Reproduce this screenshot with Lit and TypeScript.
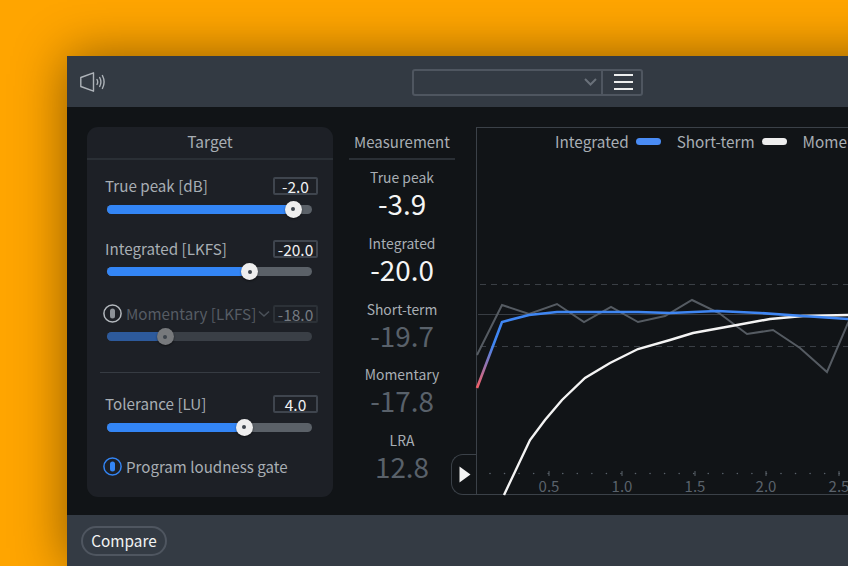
import { LitElement, html, css, svg } from "lit";
import { customElement, property } from "lit/decorators.js";

const FONT = css`"Noto Sans CJK SC", "Noto Sans", sans-serif`;

@customElement("toggle-dot")
class ToggleDot extends LitElement {
  static styles = css`
    :host {
      display: block;
      width: 19px;
      height: 19px;
      flex: none;
    }
    svg {
      display: block;
    }
  `;

  @property({ type: Boolean }) on = false;

  render() {
    const ring = this.on ? "#3385f5" : "#b4b9be";
    const pill = this.on ? "#3385f5" : "#8d9298";
    return html`<svg width="19" height="19" viewBox="0 0 19 19">
      <circle cx="9.5" cy="9.5" r="8.6" fill="none" stroke=${ring} stroke-width="1.5" />
      <rect x="7" y="4.5" width="5" height="10" rx="2.5" fill=${pill} />
    </svg>`;
  }
}

@customElement("level-slider")
class LevelSlider extends LitElement {
  static styles = css`
    :host {
      display: block;
      font-family: ${FONT};
    }
    .head {
      display: flex;
      align-items: center;
      height: 18px;
      margin-left: -2px;
    }
    .label {
      margin-top: -2px;
      font-size: 15.2px;
      line-height: 18px;
      color: #a8aeb4;
      white-space: nowrap;
    }
    .chev {
      margin-left: 2px;
    }
    .value {
      box-sizing: border-box;
      margin-left: auto;
      margin-right: -6px;
      width: 45px;
      height: 18px;
      border: 2px solid #3f454e;
      border-radius: 2px;
      font-size: 15.5px;
      line-height: 14px;
      text-align: center;
      color: #f0f1f2;
    }
    .track {
      position: relative;
      margin-top: 9.5px;
      height: 9px;
      border-radius: 5px;
      background: #5b6168;
    }
    .fill {
      height: 100%;
      border-radius: 5px;
      background: #3385f5;
    }
    .knob {
      position: absolute;
      top: -4px;
      width: 17px;
      height: 17px;
      margin-left: -8.5px;
      border-radius: 50%;
      background: #eeeeee;
      box-shadow: 0 1px 2px rgba(0, 0, 0, 0.5);
      display: flex;
      align-items: center;
      justify-content: center;
    }
    .knob i {
      width: 4px;
      height: 4px;
      border-radius: 50%;
      background: #3d444c;
    }
    .toggle {
      margin-left: -2px;
      margin-right: 4px;
    }
    :host([off]) .label {
      color: #565c64;
    }
    :host([off]) .value {
      border-color: #2c3137;
      color: #757b82;
    }
    :host([off]) .track {
      background: #3a3f46;
    }
    :host([off]) .fill {
      background: #2d5a9c;
    }
    :host([off]) .knob {
      background: #77797c;
    }
  `;

  @property() label = "";
  @property() value = "";
  @property({ type: Number }) pos = 0;
  @property({ type: Boolean, reflect: true }) off = false;

  render() {
    return html`
      <div class="head">
        ${this.off ? html`<toggle-dot class="toggle"></toggle-dot>` : ""}
        <span class="label">${this.label}</span>
        ${this.off
          ? html`<svg class="chev" width="12" height="8" viewBox="0 0 12 8">
              <path d="M1 1.5 L6 6 L11 1.5" fill="none" stroke="#4a5058" stroke-width="1.6" />
            </svg>`
          : ""}
        <span class="value">${this.value}</span>
      </div>
      <div class="track">
        <div class="fill" style="width:${this.pos}px"></div>
        <div class="knob" style="left:${this.pos}px"><i></i></div>
      </div>
    `;
  }
}

@customElement("app-root")
export class AppRoot extends LitElement {
  static styles = css`
    :host {
      display: block;
      width: 848px;
      height: 566px;
      overflow: hidden;
      background: #ffa500;
      font-family: ${FONT};
    }
    .window {
      width: 1000px;
      margin: 56px 0 0 67px;
      box-shadow: 0 0 50px rgba(0, 0, 0, 0.45);
    }
    .toolbar {
      display: flex;
      align-items: center;
      height: 51px;
      padding-left: 13px;
      background: #333a43;
    }
    .speaker {
      width: 26px;
      height: 20px;
      margin-right: 306px;
    }
    .dropdown {
      display: flex;
      box-sizing: border-box;
      width: 231px;
      height: 27px;
      margin-top: 1px;
      border: 2px solid #4f5660;
      border-radius: 3px;
    }
    .select {
      flex: 1;
      display: flex;
      align-items: center;
      justify-content: flex-end;
      padding-right: 4px;
      border-right: 2px solid #4f5660;
    }
    .menu {
      box-sizing: border-box;
      width: 38px;
      padding-left: 2px;
      display: flex;
      flex-direction: column;
      align-items: center;
      justify-content: center;
      gap: 5px;
    }
    .menu i {
      width: 19px;
      height: 2px;
      background: #eceded;
    }
    .body {
      display: flex;
      align-items: flex-start;
      height: 408px;
      box-sizing: border-box;
      padding: 20px 0 0 20px;
      background: #111417;
    }
    .panel {
      box-sizing: border-box;
      width: 246px;
      height: 370px;
      border-radius: 11px;
      background: #1d2026;
    }
    .panel-title {
      height: 31px;
      border-bottom: 2px solid #2a2f35;
      text-align: center;
      font-size: 15.5px;
      line-height: 29px;
      color: #a8aeb4;
    }
    .controls {
      padding: 17px 21px 0 20px;
    }
    .gap-integrated {
      margin-top: 26px;
    }
    .gap-momentary {
      margin-top: 28.5px;
    }
    .divider {
      height: 1px;
      margin: 31px -8px 22px -7px;
      background: #363b42;
    }
    .gate {
      display: flex;
      align-items: center;
      gap: 4px;
      margin: 25.5px 0 0 -4px;
      font-size: 15.1px;
      line-height: 17px;
      color: #a8aeb4;
      white-space: nowrap;
    }
    .measure {
      width: 106px;
      margin-left: 16px;
      text-align: center;
    }
    .measure-title {
      height: 31px;
      border-bottom: 2px solid #2a2f35;
      font-size: 15px;
      line-height: 29px;
      color: #a8aeb4;
    }
    .metric {
      height: 65.75px;
    }
    .metrics {
      padding-top: 8px;
    }
    .metric-label {
      font-size: 13.9px;
      line-height: 18px;
      color: #a8aeb4;
    }
    .metric-value {
      font-size: 27.8px;
      line-height: 34px;
      color: #f4f5f5;
    }
    .metric.dim .metric-value {
      color: #59616a;
    }
    .chart {
      position: relative;
      box-sizing: border-box;
      width: 500px;
      height: 368px;
      margin-left: 21px;
      border: solid #3b4148;
      border-width: 1px 0 1px 1px;
    }
    .chart svg {
      display: block;
      overflow: visible;
    }
    .legend {
      position: absolute;
      top: 3px;
      left: 78px;
      display: flex;
      align-items: center;
      font-size: 15.3px;
      line-height: 20px;
      color: #a8aeb4;
      white-space: nowrap;
    }
    .swatch {
      width: 25px;
      height: 7px;
      margin: 0 16px 0 7px;
      border-radius: 4px;
    }
    .play {
      position: absolute;
      right: 100%;
      bottom: -1px;
      box-sizing: border-box;
      width: 26px;
      height: 41px;
      border: solid #3b4148;
      border-width: 1px 0 1px 1px;
      border-radius: 12px 0 0 12px;
      display: flex;
      align-items: center;
      justify-content: center;
    }
    .tick {
      font-size: 15px;
      fill: #5a626b;
      text-anchor: middle;
      font-family: ${FONT};
    }
    .footer {
      display: flex;
      align-items: center;
      height: 51px;
      padding-left: 14px;
      background: #343b44;
    }
    .compare {
      box-sizing: border-box;
      width: 86px;
      height: 30px;
      border: 2px solid #4f5660;
      border-radius: 15px;
      font-size: 15.3px;
      line-height: 24px;
      text-align: center;
      color: #f2f3f3;
    }
  `;

  metrics = [
    { label: "True peak", value: "-3.9" },
    { label: "Integrated", value: "-20.0" },
    { label: "Short-term", value: "-19.7", dim: true },
    { label: "Momentary", value: "-17.8", dim: true },
    { label: "LRA", value: "12.8", dim: true },
  ];

  chart() {
    const grey = "477,355 502,305 529,314 557,304 584,322 611,307 638,322 665,316 692,300 719,313 747,334 773,330 800,348 827,372 848,323 860,300";
    const blue = "477,388 502,322 529,315 557,312 610,312 638,312 670,313 717,311 760,313 803,316 833,318 848,319 900,319";
    const white = "504,495 530,440 545,420 562,400 585,378 610,363 638,349 670,340 693,333 737,325 770,319 803,316 848,315 900,315";
    const minor = [];
    for (let x = 490; x < 980; x += 14.55) minor.push(x);
    const majors = [
      [549, "0.5"],
      [622, "1.0"],
      [695, "1.5"],
      [766, "2.0"],
      [839, "2.5"],
    ] as const;
    return html`<svg width="499" height="366" viewBox="477 128 499 366">
      <defs>
        <linearGradient id="blueLine" gradientUnits="userSpaceOnUse" x1="0" y1="386" x2="0" y2="345">
          <stop offset="0" stop-color="#f0606a" />
          <stop offset="1" stop-color="#3f86f2" />
        </linearGradient>
      </defs>
      ${svg`
        <line x1="480" x2="980" y1="284.5" y2="284.5" stroke="#3a3f45" stroke-dasharray="6 5" />
        <line x1="480" x2="980" y1="346.5" y2="346.5" stroke="#3a3f45" stroke-dasharray="6 5" />
        <line x1="478" x2="980" y1="314.5" y2="314.5" stroke="#383d43" />
        ${minor.map((x) => svg`<circle cx=${x} cy="473.5" r="0.8" fill="#5a626b" />`)}
        ${majors.map(
          ([x, t]) => svg`
            <line x1=${x} x2=${x} y1="471" y2="476" stroke="#5a626b" />
            <text class="tick" x=${x} y="492">${t}</text>`
        )}
        <polyline points=${grey} fill="none" stroke="#555b62" stroke-width="2" />
        <polyline points=${white} fill="none" stroke="#f4f4f4" stroke-width="2.4" />
        <polyline points=${blue} fill="none" stroke="url(#blueLine)" stroke-width="2.6" />
      `}
    </svg>`;
  }

  render() {
    return html`
      <div class="window">
        <div class="toolbar">
          <svg class="speaker" viewBox="0 0 26 20">
            <path d="M0.8 5.5 L13.5 0.8 V19.2 L0.8 14.5 Z" fill="none" stroke="#aeb3b9" stroke-width="1.4" stroke-linejoin="round" />
            <path d="M17 7.5 Q18.4 10 17 12.5 M19.7 5.5 Q22.1 10 19.7 14.5 M22.4 3.5 Q25.8 10 22.4 16.5" fill="none" stroke="#aeb3b9" stroke-width="1.4" stroke-linecap="round" />
          </svg>
          <div class="dropdown">
            <div class="select">
              <svg width="13" height="8" viewBox="0 0 13 8">
                <path d="M1 1 L6.5 6.5 L12 1" fill="none" stroke="#6a717a" stroke-width="2" />
              </svg>
            </div>
            <div class="menu"><i></i><i></i><i></i></div>
          </div>
        </div>
        <div class="body">
          <div class="panel">
            <div class="panel-title">Target</div>
            <div class="controls">
              <level-slider label="True peak [dB]" value="-2.0" pos="186"></level-slider>
              <level-slider class="gap-integrated" label="Integrated [LKFS]" value="-20.0" pos="142.6"></level-slider>
              <level-slider class="gap-momentary" label="Momentary [LKFS]" value="-18.0" pos="58.3" off></level-slider>
              <div class="divider"></div>
              <level-slider label="Tolerance [LU]" value="4.0" pos="137.3"></level-slider>
              <div class="gate"><toggle-dot on></toggle-dot><span>Program loudness gate</span></div>
            </div>
          </div>
          <div class="measure">
            <div class="measure-title">Measurement</div>
            <div class="metrics">
              ${this.metrics.map(
                (m) => html`<div class="metric ${m.dim ? "dim" : ""}">
                  <div class="metric-label">${m.label}</div>
                  <div class="metric-value">${m.value}</div>
                </div>`
              )}
            </div>
          </div>
          <div class="chart">
            ${this.chart()}
            <div class="legend">
              Integrated<span class="swatch" style="background:#4a8cf5"></span>
              Short-term<span class="swatch" style="background:#eeeeee"></span>
              Momentary
            </div>
            <div class="play">
              <svg width="12" height="17" viewBox="0 0 12 17"><path d="M0.5 0.5 L11.5 8.5 L0.5 16.5 Z" fill="#f4f4f4" /></svg>
            </div>
          </div>
        </div>
        <div class="footer"><div class="compare">Compare</div></div>
      </div>
    `;
  }
}
